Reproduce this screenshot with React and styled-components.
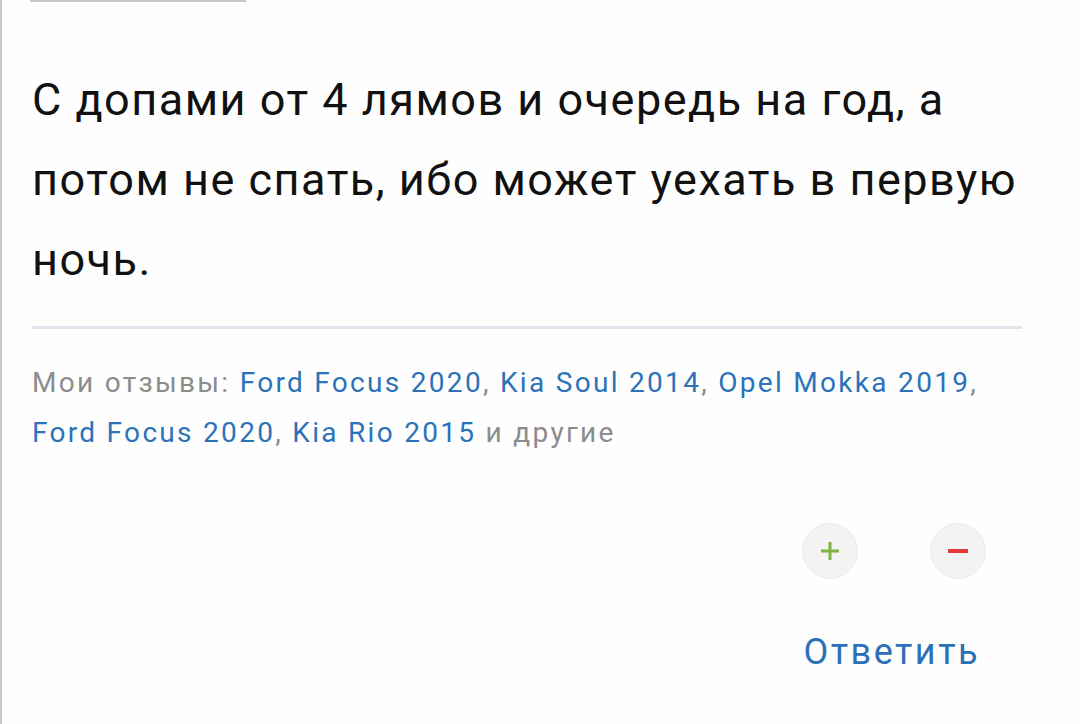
import styled, { createGlobalStyle } from "styled-components";

const GlobalStyle = createGlobalStyle`
  html, body {
    margin: 0;
    padding: 0;
    background: #fefefe;
  }
  body {
    font-family: Roboto, "Noto Sans", sans-serif;
  }
`;

const Page = styled.div`
  width: 1080px;
  height: 724px;
  border-left: 2px solid #c9c9c9;
  box-sizing: border-box;
  overflow: hidden;
`;

const TopRule = styled.div`
  width: 216px;
  height: 2px;
  margin-left: 28px;
  background: #c8c8c8;
`;

const Comment = styled.div`
  padding: 58px 58px 0 30px;
`;

const Body = styled.p`
  margin: 0;
  font-size: 45px;
  line-height: 80px;
  letter-spacing: 1.5px;
  color: #111;
`;

const Divider = styled.hr`
  margin: 26px 0 0;
  border: 0;
  height: 3px;
  background: #dfe5ec;
`;

const Reviews = styled.p`
  margin: 29px 0 0;
  font-size: 28px;
  line-height: 50px;
  letter-spacing: 2.3px;
  color: #8c8c8c;
`;

const ReviewLink = styled.a`
  color: #2c72b8;
  text-decoration: none;
`;

const Votes = styled.div`
  display: flex;
  justify-content: flex-end;
  gap: 72px;
  margin-top: 65px;
  padding-right: 36px;
`;

const VoteButton = styled.button`
  width: 56px;
  height: 56px;
  border-radius: 50%;
  border: 1px solid #ececec;
  background: #f3f3f3;
  display: flex;
  align-items: center;
  justify-content: center;
  padding: 0;
`;

const ReplyRow = styled.div`
  display: flex;
  justify-content: flex-end;
  margin-top: 52px;
  padding-right: 42px;
`;

const Reply = styled.a`
  font-size: 36px;
  letter-spacing: 2.5px;
  color: #2d70b8;
  text-decoration: none;
`;

const reviews = [
  "Ford Focus 2020",
  "Kia Soul 2014",
  "Opel Mokka 2019",
  "Ford Focus 2020",
  "Kia Rio 2015",
];

export default function App() {
  return (
    <>
      <GlobalStyle />
      <Page>
        <TopRule />
        <Comment>
          <Body>
            С допами от 4 лямов и очередь на год, а потом не спать, ибо может
            уехать в первую ночь.
          </Body>
          <Divider />
          <Reviews>
            Мои отзывы:{" "}
            {reviews.map((r, i) => (
              <span key={i}>
                <ReviewLink href="#">{r}</ReviewLink>
                {i < reviews.length - 1 ? ", " : " "}
              </span>
            ))}
            и другие
          </Reviews>
          <Votes>
            <VoteButton>
              <svg width="24" height="24" viewBox="0 0 24 24">
                <path d="M12 3v18M3 12h18" stroke="#7cb342" strokeWidth="3" />
              </svg>
            </VoteButton>
            <VoteButton>
              <svg width="24" height="24" viewBox="0 0 24 24">
                <path d="M2 12h20" stroke="#e53935" strokeWidth="4" />
              </svg>
            </VoteButton>
          </Votes>
          <ReplyRow>
            <Reply href="#">Ответить</Reply>
          </ReplyRow>
        </Comment>
      </Page>
    </>
  );
}
